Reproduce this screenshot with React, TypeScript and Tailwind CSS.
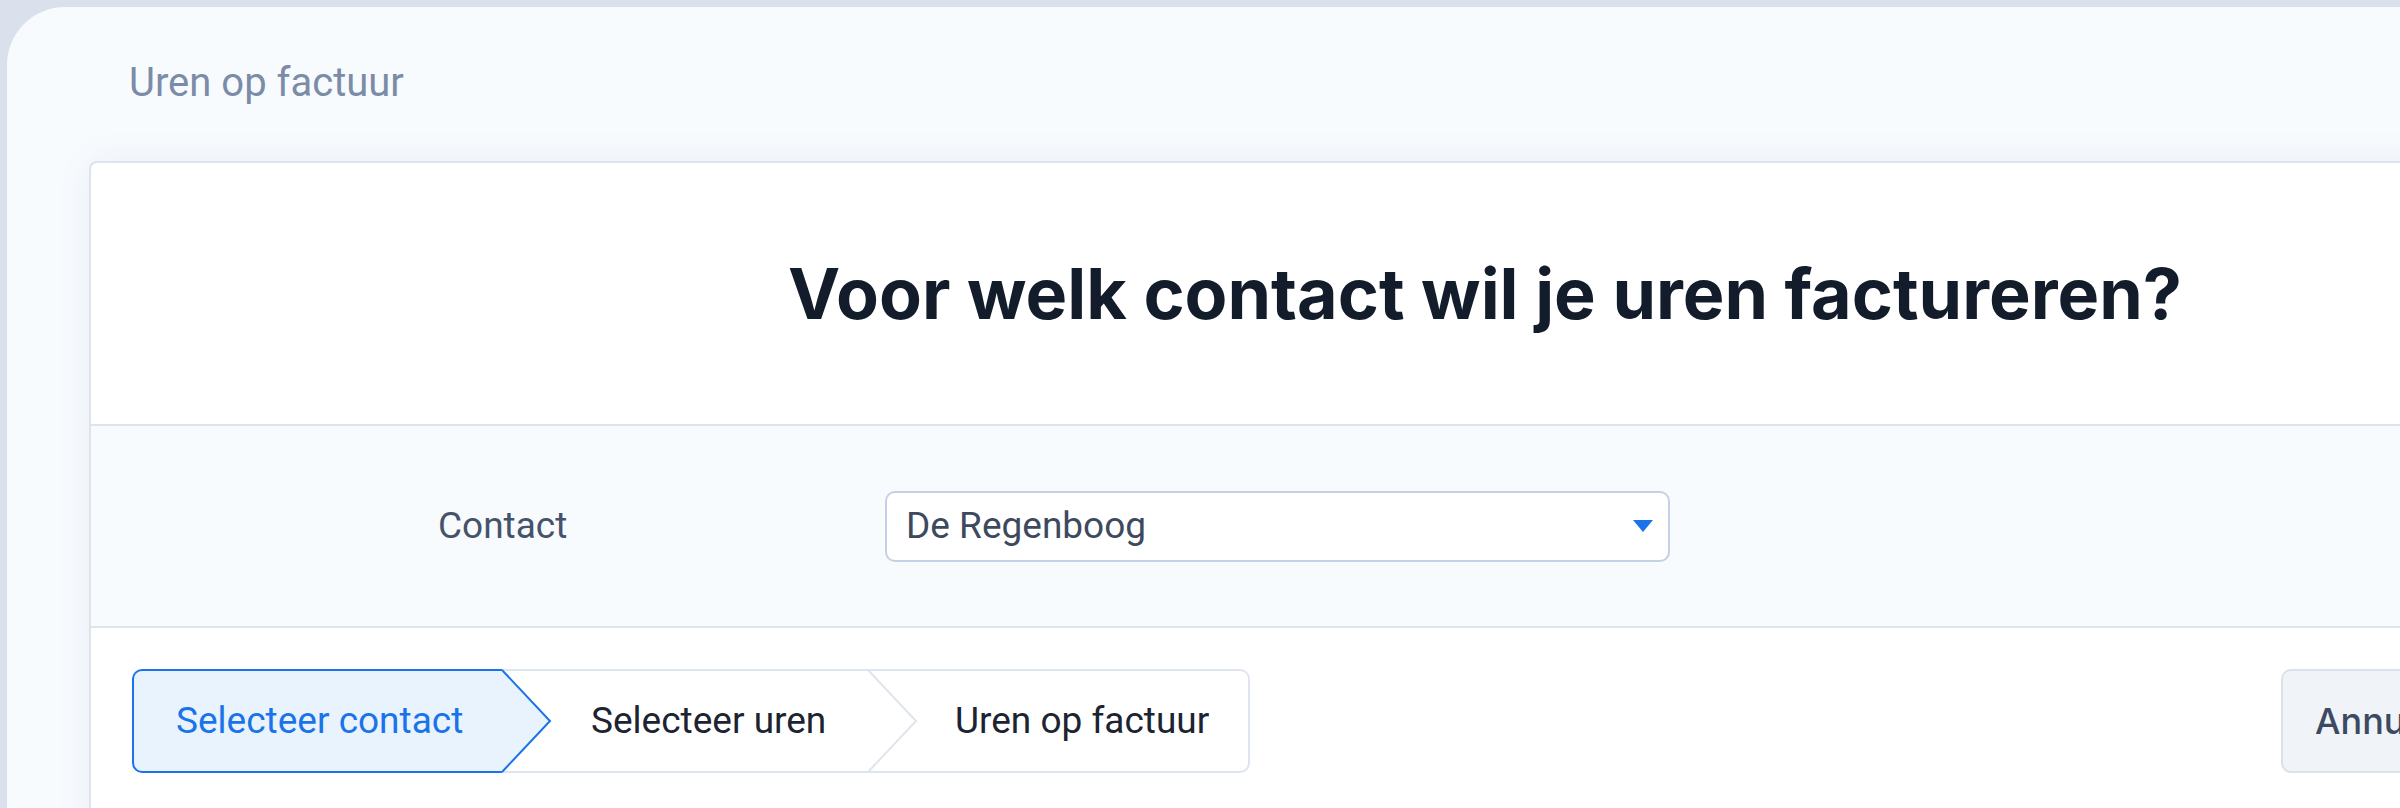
import React from "react";

const steps = [
  { label: "Selecteer contact", active: true },
  { label: "Selecteer uren", active: false },
  { label: "Uren op factuur", active: false },
];

function Chevron({ active }: { active: boolean }) {
  const grey = "#dfe5ee";
  return (
    <svg width="50" height="104" viewBox="0 0 50 104" className="shrink-0 block">
      <rect x="0" y="0" width="50" height="104" fill="#ffffff" />
      <line x1="0" y1="1" x2="50" y2="1" stroke={grey} strokeWidth="2" />
      <line x1="0" y1="103" x2="50" y2="103" stroke={grey} strokeWidth="2" />
      {active && <polygon points="0,0 49,52 0,104" fill="#e8f3fe" />}
      <polyline
        points="0,1 48,52 0,103"
        fill="none"
        stroke={active ? "#1a73e8" : grey}
        strokeWidth="2"
      />
    </svg>
  );
}

function Steps() {
  return (
    <div className="flex h-[104px] items-stretch text-[37px]">
      <div className="flex w-[370px] items-center rounded-l-[10px] border-2 border-r-0 border-[#1a73e8] bg-[#e8f3fe] pl-[42px] text-[#1a73e8]">
        {steps[0].label}
      </div>
      <Chevron active />
      <div className="flex w-[316px] items-center border-y-2 border-[#dfe5ee] bg-white pl-[39px] text-[#1c2331]">
        {steps[1].label}
      </div>
      <Chevron active={false} />
      <div className="flex w-[332px] items-center rounded-r-[10px] border-y-2 border-r-2 border-[#dfe5ee] bg-white pl-[37px] text-[#1c2331]">
        {steps[2].label}
      </div>
    </div>
  );
}

export default function App() {
  return (
    <div className="h-[808px] w-[2400px] overflow-hidden bg-[#dae1ec] pl-[7px] pt-[7px] font-['Roboto',sans-serif]">
      <div className="flex h-[900px] w-[2900px] flex-col rounded-tl-[58px] bg-[#f8fbfe] pl-[82px] pt-[56px]">
        <div className="ml-[40px] text-[40px] leading-[40px] text-[#7b8ca8]">Uren op factuur</div>

        <div className="mt-[58px] flex w-[2792px] flex-1 flex-col rounded-[8px] border-2 border-[#dde4ee] bg-white shadow-[0_0_36px_rgba(40,70,130,0.07)]">
          {/* Heading */}
          <div className="flex h-[261px] items-center justify-center">
            <h1 className="font-['Inter',sans-serif] text-[70px] font-bold leading-none text-[#131c2a]">
              Voor welk contact wil je uren factureren?
            </h1>
          </div>

          {/* Contact field */}
          <div className="flex h-[204px] items-center border-y-2 border-[#dde4ee] bg-[#f8fbfe] pl-[347px]">
            <div className="w-[447px] text-[37px] text-[#45536a]">Contact</div>
            <div className="flex h-[71px] w-[785px] items-center justify-between rounded-[10px] border-2 border-[#c6d0e4] bg-white pl-[19px] pr-[15px]">
              <span className="text-[37px] text-[#3d4a5e]">De Regenboog</span>
              <svg width="20" height="12" viewBox="0 0 20 12">
                <polygon points="0,0 20,0 10,12" fill="#1a73e8" />
              </svg>
            </div>
          </div>

          {/* Steps + actions */}
          <div className="flex items-start justify-between px-[41px] pt-[41px]">
            <Steps />
            <div className="flex h-[104px] gap-[20px]">
              <button className="flex w-[250px] items-center rounded-[10px] border-2 border-[#dce2ea] bg-[#f0f3f8] pl-[32px] font-['Inter',sans-serif] text-[36px] font-medium text-[#3c4a61]">
                Annuleren
              </button>
              <button className="flex w-[287px] items-center justify-center rounded-[10px] bg-[#1a73e8] font-['Inter',sans-serif] text-[36px] font-medium text-white">
                Volgende
              </button>
            </div>
          </div>
        </div>
      </div>
    </div>
  );
}
